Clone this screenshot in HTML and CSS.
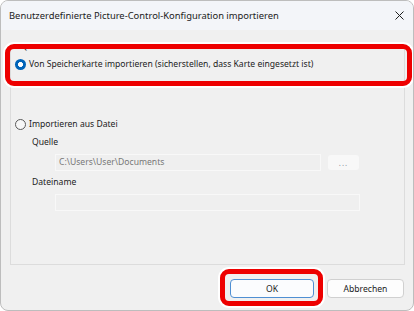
FILE: index.html
```html
<!DOCTYPE html>
<html lang="de">
  <head>
    <meta charset="UTF-8" />
    <meta name="viewport" content="width=device-width, initial-scale=1.0" />
    <title>Picture-Control importieren</title>
    <link rel="stylesheet" href="styles.css">
  </head>
  <body>
    <div class="window">
      <header class="titlebar">
        <span class="title">Benutzerdefinierte Picture-Control-Konfiguration importieren</span>
        <svg class="close" width="9" height="9" viewBox="0 0 9 9">
          <path d="M0.5 0.5l8 8M8.5 0.5l-8 8" stroke="#1f1f1f" stroke-width="1" fill="none" />
        </svg>
      </header>
      <main class="content">
        <fieldset class="group">
          <legend>Quelle</legend>
          <label class="radio">
            <span class="dot checked"></span>
            Von Speicherkarte importieren (sicherstellen, dass Karte eingesetzt ist)
          </label>
          <label class="radio second">
            <span class="dot"></span>
            Importieren aus Datei
          </label>
          <div class="fields">
            <div class="field-label">Quelle</div>
            <div class="field-row">
              <div class="input">C:\Users\User\Documents</div>
              <button class="browse">...</button>
            </div>
            <div class="field-label">Dateiname</div>
            <div class="input wide"></div>
          </div>
        </fieldset>
        <div class="actions">
          <button class="btn primary">OK</button>
          <button class="btn">Abbrechen</button>
        </div>
      </main>

      <!-- annotation frames drawn over the dialog -->
      <div class="callout callout-source"></div>
      <div class="callout callout-ok"></div>
    </div>
  </body>
</html>
```

FILE: styles.css
```css
* {
  box-sizing: border-box;
}

body {
  margin: 0;
  background: #ffffff;
  font-family: "Noto Sans", "Liberation Sans", sans-serif;
  font-size: 8.6px;
  color: #1b1b1b;
}

.window {
  position: relative;
  width: 414px;
  height: 311px;
  border: 1px solid #bdbdbd;
  border-radius: 8px;
  overflow: hidden;
  display: flex;
  flex-direction: column;
  background: #f0f0f0;
}

.titlebar {
  height: 29px;
  flex: none;
  display: flex;
  align-items: center;
  justify-content: space-between;
  padding: 0 9px 0 8px;
  background: #f3f5f9;
}

.title {
  font-size: 9.4px;
}

.close {
  display: block;
}

.content {
  flex: 1;
  padding: 10px 8px 0 9px;
}

.group {
  margin: 0;
  padding: 5px 4px 53px 4px;
  border: 1px solid #dcdcdc;
  min-width: 0;
}

.group legend {
  margin-left: 4px;
  padding: 0 2px;
  line-height: 12px;
}

.radio {
  display: flex;
  align-items: center;
  gap: 3px;
  height: 14px;
}

.radio.second {
  margin-top: 46px;
}

.dot {
  width: 11px;
  height: 11px;
  border-radius: 50%;
  border: 1px solid #5a5a5a;
  background: #f7f7f7;
  flex: none;
}

.dot.checked {
  border: none;
  background: radial-gradient(circle, #ffffff 0 2.2px, #0063b8 2.8px);
}

.fields {
  padding-left: 17px;
}

.field-label {
  height: 14px;
  line-height: 14px;
  margin-top: 4px;
}

.field-label + .field-row,
.field-label + .input {
  margin-top: 5px;
  margin-left: 23px;
}

.field-row {
  display: flex;
  align-items: center;
  gap: 7px;
}

.input {
  width: 266px;
  height: 17px;
  line-height: 15px;
  padding: 0 3px;
  border: 1px solid #f8f8f8;
  background: #efefef;
  color: #777777;
}

.input.wide {
  width: 305px;
}

.browse {
  width: 31px;
  height: 15px;
  padding: 0;
  border: none;
  border-radius: 3px;
  background: #f8f8f8;
  color: #8a8fa0;
  font: inherit;
  font-size: 8px;
  letter-spacing: 1px;
}

.actions {
  display: flex;
  justify-content: flex-end;
  gap: 13px;
  margin-top: 14px;
  padding-right: 1px;
}

.btn {
  width: 77px;
  height: 19px;
  padding: 0;
  border: 1px solid #d0d0d0;
  border-radius: 4px;
  background: #fdfdfd;
  font: inherit;
  color: #1b1b1b;
}

.btn.primary {
  width: 84px;
  border-color: #4f8fd3;
  background: #fbfcfe;
}

.callout {
  position: absolute;
  border: 5px solid #ee0000;
  border-radius: 9px;
  box-shadow: 0 0 0 2px #ffffff;
}

.callout-source {
  left: 4px;
  top: 43px;
  width: 407px;
  height: 42px;
}

.callout-ok {
  left: 219px;
  top: 268px;
  width: 103px;
  height: 37px;
}
```
